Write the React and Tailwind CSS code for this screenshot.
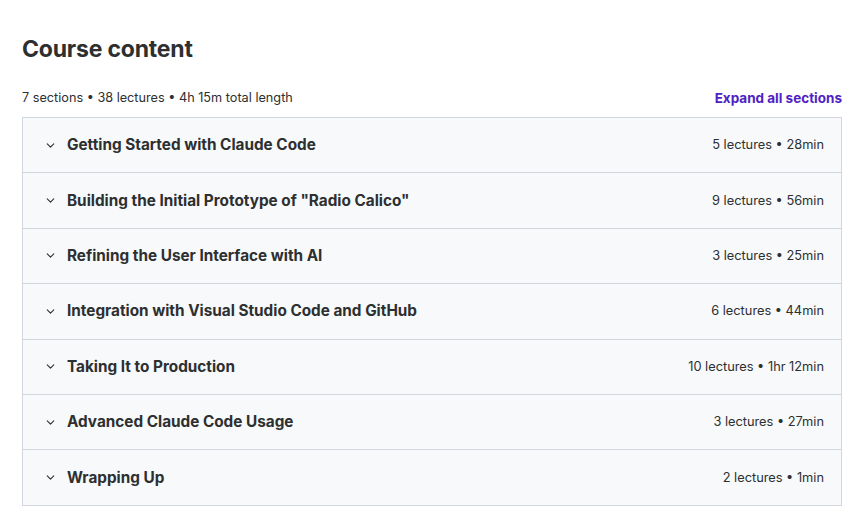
import { ChevronDown } from 'lucide-react';

const sections = [
  { title: 'Getting Started with Claude Code', meta: '5 lectures • 28min' },
  { title: 'Building the Initial Prototype of "Radio Calico"', meta: '9 lectures • 56min' },
  { title: 'Refining the User Interface with AI', meta: '3 lectures • 25min' },
  { title: 'Integration with Visual Studio Code and GitHub', meta: '6 lectures • 44min' },
  { title: 'Taking It to Production', meta: '10 lectures • 1hr 12min' },
  { title: 'Advanced Claude Code Usage', meta: '3 lectures • 27min' },
  { title: 'Wrapping Up', meta: '2 lectures • 1min' },
];

const App = () => {
  return (
    <div className="min-h-screen bg-white px-[22px] pt-[33px] font-['Inter',sans-serif] text-[#2d2f31]">
      <div className="w-[820px]">
        {/* Header */}
        <h2 className="text-[23px] font-bold leading-[32px] tracking-[-0.2px]">Course content</h2>
        <div className="mt-[25px] flex items-end justify-between pb-[11px]">
          <span className="text-[12.7px] leading-[16px]">7 sections • 38 lectures • 4h 15m total length</span>
          <button className="text-[13.5px] font-bold leading-[16px] text-[#5022c3]">Expand all sections</button>
        </div>

        {/* Sections */}
        <div className="border-x border-b border-[#d1d7dc]">
          {sections.map((s, i) => (
            <div
              key={i}
              className="flex h-[55.4px] items-center justify-between border-t border-[#d1d7dc] bg-[#f7f9fa] pl-[21px] pr-[17px]"
            >
              <div className="flex items-center">
                <ChevronDown className="mr-[10px] h-[13px] w-[13px] text-[#2d2f31]" strokeWidth={2} />
                <span className="text-[15.3px] font-bold leading-[20px]">{s.title}</span>
              </div>
              <span className="text-[12.8px] leading-[20px]">{s.meta}</span>
            </div>
          ))}
        </div>
      </div>
    </div>
  );
};

export default App;
